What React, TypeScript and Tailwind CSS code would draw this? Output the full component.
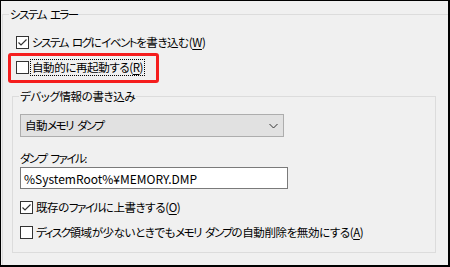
import type { ReactNode } from "react";

const font =
	"[font-family:'Noto_Sans_CJK_JP',sans-serif] [font-feature-settings:'palt'] text-[11.5px] tracking-[-0.4px] text-black";

// katakana runs are set tighter, like Yu Gothic UI
const Kt = ({ children }: { children: ReactNode }) => (
	<span className="tracking-[-1.5px]">{children}</span>
);

const Sp = () => <span className="inline-block w-[4px]" />;

const Box = ({ checked }: { checked?: boolean }) => (
	<span className="flex h-[13px] w-[13px] shrink-0 items-center justify-center border border-[#333333] bg-white">
		{checked && (
			<svg width="11" height="11" viewBox="0 0 11 11">
				<polyline
					points="1.5,5.5 4,8 9.5,2.5"
					fill="none"
					stroke="#333333"
					strokeWidth="1.2"
				/>
			</svg>
		)}
	</span>
);

const CheckRow = ({
	checked,
	focused,
	children,
}: {
	checked?: boolean;
	focused?: boolean;
	children: ReactNode;
}) => (
	<div className="flex h-[17px] items-center gap-[3px]">
		<Box checked={checked} />
		<span
			className={
				focused
					? "border border-dotted border-black px-[1px] leading-[15px] -ml-[2px]"
					: "leading-[15px]"
			}
		>
			{children}
		</span>
	</div>
);

const Key = ({ k }: { k: string }) => (
	<>
		(<span className="underline underline-offset-2">{k}</span>)
	</>
);

export default function App() {
	return (
		<div
			className={`relative h-[267px] w-[450px] overflow-hidden border-t border-l border-r-2 border-b-2 border-black bg-[#f0f0f0] ${font}`}
		>
			<fieldset className="ml-[1px] mt-[6px] h-[300px] w-[480px] border-t border-l border-[#dcdcdc] pl-[9px]">
				<legend className="-ml-[3px] px-[1px] leading-[15px]">
					<Kt>システム</Kt>
					<Sp />
					<Kt>エラー</Kt>
				</legend>

				<div className="flex flex-col gap-[8px] pl-[4px] pt-[12px]">
					<CheckRow checked>
						<Kt>システム</Kt>
						<Sp />
						<Kt>ログ</Kt>に<Kt>イベント</Kt>を書き込む<Key k="W" />
					</CheckRow>
					<CheckRow focused>
						自動的に再起動する<Key k="R" />
					</CheckRow>
				</div>

				<fieldset className="mt-[13px] w-[424px] border border-[#dcdcdc] pb-[11px] pl-[7px]">
					<legend className="-ml-[1px] px-[1px] leading-[15px]">
						デバッグ情報の書き込み
					</legend>

					<div className="pt-[10px]">
						<div className="flex h-[23px] w-[264px] items-center justify-between border border-[#adadad] bg-[#e1e1e1] pl-[4px] pr-[5px]">
							<span className="leading-[15px]">
								自動<Kt>メモリ</Kt>
								<Sp />
								<Kt>ダンプ</Kt>
							</span>
							<svg width="9" height="6" viewBox="0 0 9 6">
								<polyline
									points="0.5,1 4.5,5 8.5,1"
									fill="none"
									stroke="#333333"
									strokeWidth="1"
								/>
							</svg>
						</div>
					</div>

					<div className="mt-[14px] leading-[15px]">
						<Kt>ダンプ</Kt>
						<Sp />
						<Kt>ファイル</Kt>:
					</div>
					<div className="mt-[1px] flex h-[22px] w-[268px] items-center border border-[#7a7a7a] bg-white pl-[3px]">
						<span className="text-[12px] leading-[15px] tracking-normal">
							%SystemRoot%¥MEMORY.DMP
						</span>
					</div>

					<div className="mt-[10px] flex flex-col gap-[8px]">
						<CheckRow checked>
							既存の<Kt>ファイル</Kt>に上書きする<Key k="O" />
						</CheckRow>
						<CheckRow>
							<Kt>ディスク</Kt>領域が少ないときでも<Kt>メモリ</Kt>
							<Sp />
							<Kt>ダンプ</Kt>の自動削除を無効にする
							<Key k="A" />
						</CheckRow>
					</div>
				</fieldset>
			</fieldset>

			<div className="pointer-events-none absolute left-[7px] top-[52px] h-[30px] w-[151px] rounded-[3px] border-[3px] border-[#f51d1d]" />
		</div>
	);
}
